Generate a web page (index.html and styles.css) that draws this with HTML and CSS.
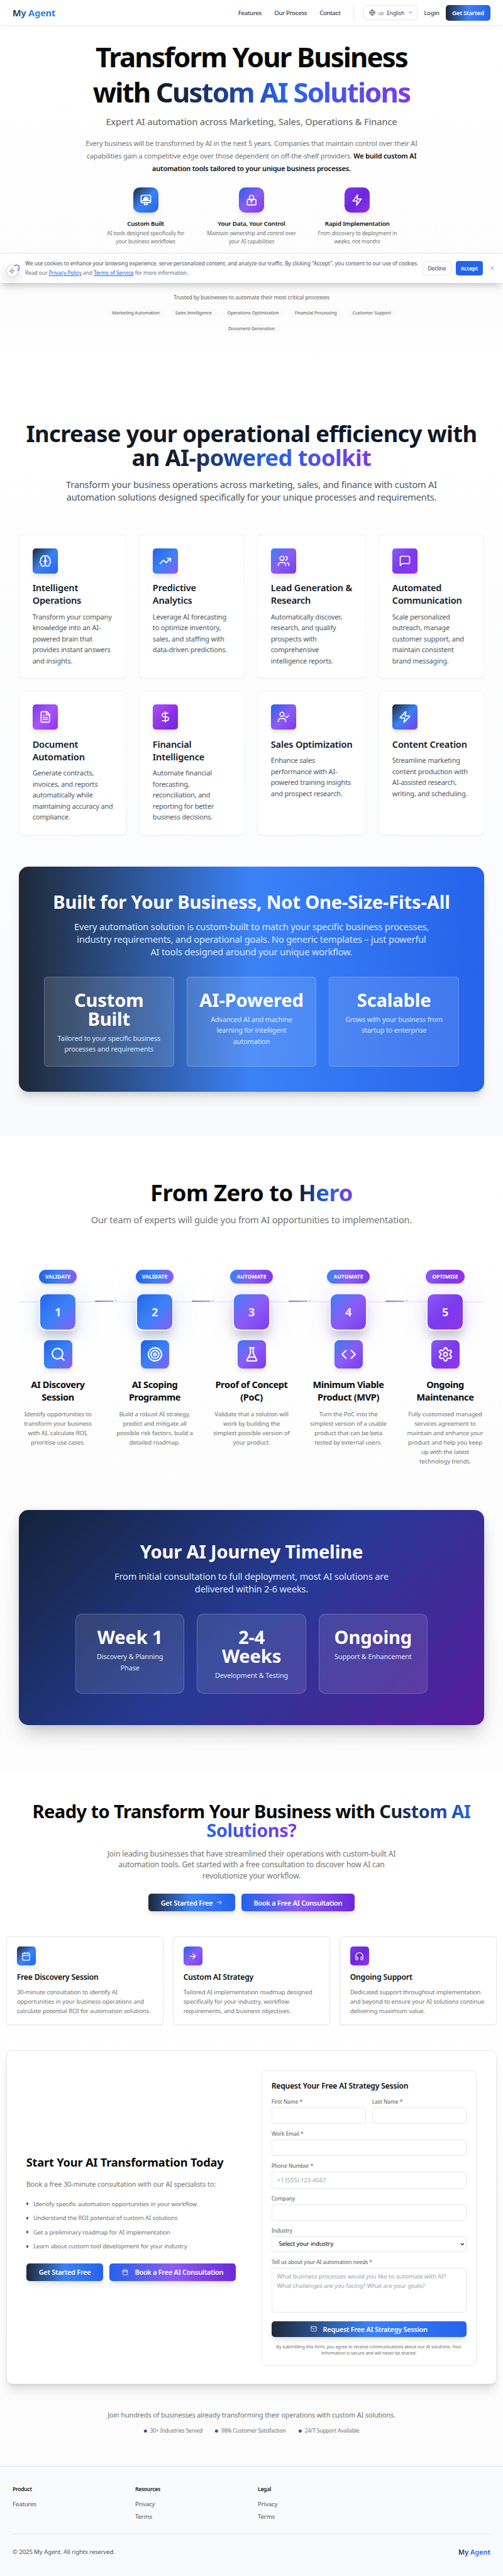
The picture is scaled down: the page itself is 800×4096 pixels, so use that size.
FILE: index.html
```html
<!DOCTYPE html>
<html lang="en">
<head>
<meta charset="utf-8">
<title>My Agent</title>
<link rel="stylesheet" href="styles.css">
</head>
<body>
<header class="nav">
  <a class="logo">My Agent</a>
  <nav class="nav-links"><a>Features</a><a>Our Process</a><a>Contact</a></nav>
  <div class="nav-side">
    <div class="lang">
      <svg class="ic" viewBox="0 0 24 24"><circle cx="12" cy="12" r="10"/><path d="M12 2a14.5 14.5 0 0 0 0 20 14.5 14.5 0 0 0 0-20M2 12h20"/></svg>
      <span class="cc">us</span><span>English</span>
      <svg class="ic chev" viewBox="0 0 24 24"><path d="m5 8 7 8 7-8"/></svg>
    </div>
    <a class="login">Login</a>
    <a class="btn-start g-navy">Get Started</a>
  </div>
</header>

<div class="cookie">
  <svg class="ic shield" viewBox="0 0 24 24"><path d="M20 13c0 5-3.5 7.500-8 9-4.500-1.500-8-4-8-9V6a1 1 0 0 1 1-1c2 0 4.500-1.200 6.240-2.720a1.170 1.170 0 0 1 1.520 0C14.510 3.810 17 5 19 5a1 1 0 0 1 1 1z"/></svg>
  <p class="cookie-text">We use cookies to enhance your browsing experience, serve personalized content, and analyze our traffic. By clicking "Accept", you consent to our use of cookies.<br><span>Read our <a>Privacy Policy</a> and <a>Terms of Service</a> for more information.</span></p>
  <button class="c-btn">Decline</button>
  <button class="c-btn accept">Accept</button>
  <svg class="ic close" viewBox="0 0 24 24"><path d="M18 5 6 19M6 5l12 14"/></svg>
  <div class="widget"><svg class="ic" viewBox="0 0 24 24"><path d="M13 2 3 14h9l-1 8 10-12h-9z"/></svg></div>
</div>

<section class="hero">
  <h1>Transform Your Business<br>with <span class="gt">Custom AI Solutions</span></h1>
  <p class="sub">Expert AI automation across Marketing, Sales, Operations &amp; Finance</p>
  <p class="lead">Every business will be transformed by AI in the next 5 years. Companies that maintain control over their AI<br>capabilities gain a competitive edge over those dependent on off-the-shelf providers. <b>We build custom AI<br>automation tools tailored to your unique business processes.</b></p>
  <div class="points">
    <div class="point"><div class="tile round t1"><svg class="ic" viewBox="0 0 24 24"><rect x="3" y="3" width="18" height="14" rx="1.500"/><path d="M3 13h18M10 17.500l-1 3.500h6l-1-3.500z"/><path class="solid" d="M8.500 12.500a4 4 0 1 1 7 0z"/></svg></div><h4>Custom Built</h4><p>AI tools designed specifically for<br>your business workflows</p></div>
    <div class="point"><div class="tile round t7"><svg class="ic" viewBox="0 0 24 24"><rect x="4" y="11" width="16.500" height="10.500" rx="2"/><path d="M8 11V7a4 4 0 0 1 8 0v4M9.500 11.500 12 14l2.500-2.500M12 14v3.500"/></svg></div><h4>Your Data, Your Control</h4><p>Maintain ownership and control over<br>your AI capabilities</p></div>
    <div class="point"><div class="tile round t0"><svg class="ic" viewBox="0 0 24 24"><path d="M13 2 4 14h8l-1 8 9-12h-8z"/><path class="tint" d="m12 9 4 2-4 5-2-3z"/></svg></div><h4>Rapid Implementation</h4><p>From discovery to deployment in<br>weeks, not months</p></div>
  </div>
  <p class="trusted">Trusted by businesses to automate their most critical processes</p>
  <div class="tags"><span>Marketing Automation</span><span>Sales Intelligence</span><span>Operations Optimization</span><span>Financial Processing</span><span>Customer Support</span><span>Document Generation</span></div>
</section>

<section class="toolkit">
  <h2 class="ink">Increase your operational efficiency with<br>an <span class="gt">AI-powered toolkit</span></h2>
  <p class="intro slate">Transform your business operations across marketing, sales, and finance with custom AI<br>automation solutions designed specifically for your unique processes and requirements.</p>
  <div class="cards">
    <article class="card"><div class="tile t1"><svg class="ic" viewBox="0 0 24 24"><path d="M12 5a3 3 0 1 0-5.997.125 4 4 0 0 0-2.526 5.770 4 4 0 0 0 .556 6.588A4 4 0 1 0 12 18Z"/><path d="M12 5a3 3 0 1 1 5.997.125 4 4 0 0 1 2.526 5.770 4 4 0 0 1-.556 6.588A4 4 0 1 1 12 18Z"/><path d="M15 13a4.500 4.500 0 0 1-3-4 4.500 4.500 0 0 1-3 4"/></svg></div><h3>Intelligent<br>Operations</h3><p>Transform your company<br>knowledge into an AI-<br>powered brain that<br>provides instant answers<br>and insights.</p></article>
    <article class="card"><div class="tile t2"><svg class="ic" viewBox="0 0 24 24"><path d="m22 7-8.500 8.500-5-5L2 17M16 7h6v6"/></svg></div><h3>Predictive<br>Analytics</h3><p>Leverage AI forecasting<br>to optimize inventory,<br>sales, and staffing with<br>data-driven predictions.</p></article>
    <article class="card"><div class="tile t3"><svg class="ic" viewBox="0 0 24 24"><path d="M16 21v-2a4 4 0 0 0-4-4H6a4 4 0 0 0-4 4v2M22 21v-2a4 4 0 0 0-3-3.870M16 3.130a4 4 0 0 1 0 7.750"/><circle cx="9" cy="7" r="4"/></svg></div><h3>Lead Generation &amp;<br>Research</h3><p>Automatically discover,<br>research, and qualify<br>prospects with<br>comprehensive<br>intelligence reports.</p></article>
    <article class="card"><div class="tile t4"><svg class="ic" viewBox="0 0 24 24"><path d="M21 15a2 2 0 0 1-2 2H7l-4 4V5a2 2 0 0 1 2-2h14a2 2 0 0 1 2 2z"/></svg></div><h3>Automated<br>Communication</h3><p>Scale personalized<br>outreach, manage<br>customer support, and<br>maintain consistent<br>brand messaging.</p></article>
    <article class="card"><div class="tile t5"><svg class="ic" viewBox="0 0 24 24"><path d="M15 2H6a2 2 0 0 0-2 2v16a2 2 0 0 0 2 2h12a2 2 0 0 0 2-2V7Z"/><path d="M14 2v4a2 2 0 0 0 2 2h4M10 9H8M16 13H8M16 17H8"/></svg></div><h3>Document<br>Automation</h3><p>Generate contracts,<br>invoices, and reports<br>automatically while<br>maintaining accuracy and<br>compliance.</p></article>
    <article class="card"><div class="tile t6"><svg class="ic" viewBox="0 0 24 24"><path d="M12 2v20M17 5H9.500a3.500 3.500 0 0 0 0 7h5a3.500 3.500 0 0 1 0 7H6"/></svg></div><h3>Financial<br>Intelligence</h3><p>Automate financial<br>forecasting,<br>reconciliation, and<br>reporting for better<br>business decisions.</p></article>
    <article class="card"><div class="tile t7"><svg class="ic" viewBox="0 0 24 24"><path d="M16 21v-2a4 4 0 0 0-4-4H6a4 4 0 0 0-4 4v2M16 11l2 2 4-4"/><circle cx="9" cy="7" r="4"/></svg></div><h3>Sales Optimization</h3><p>Enhance sales<br>performance with AI-<br>powered training insights<br>and prospect research.</p></article>
    <article class="card"><div class="tile t8"><svg class="ic" viewBox="0 0 24 24"><path d="M4 14a1 1 0 0 1-.780-1.630l9.900-10.200a.5.5 0 0 1 .86.460l-1.920 6.020A1 1 0 0 0 13 10h7a1 1 0 0 1 .780 1.630l-9.900 10.200a.5.5 0 0 1-.86-.460l1.920-6.020A1 1 0 0 0 11 14z"/></svg></div><h3>Content Creation</h3><p>Streamline marketing<br>content production with<br>AI-assisted research,<br>writing, and scheduling.</p></article>
  </div>
  <div class="banner built g-navy">
    <h3>Built for Your Business, Not One-Size-Fits-All</h3>
    <p>Every automation solution is custom-built to match your specific business processes,<br>industry requirements, and operational goals. No generic templates – just powerful<br>AI tools designed around your unique workflow.</p>
    <div class="glass-row">
      <div class="glass"><strong>Custom<br>Built</strong><small>Tailored to your specific business<br>processes and requirements</small></div>
      <div class="glass"><strong>AI-Powered</strong><small>Advanced AI and machine<br>learning for intelligent<br>automation</small></div>
      <div class="glass"><strong>Scalable</strong><small>Grows with your business from<br>startup to enterprise</small></div>
    </div>
  </div>
</section>

<section class="process">
  <h2>From Zero to <span class="gt">Hero</span></h2>
  <p class="intro">Our team of experts will guide you from AI opportunities to implementation.</p>
  <div class="steps">
    <div class="step blue"><span class="pill p1">VALIDATE</span><div class="num t2">1</div><div class="tile t2"><svg class="ic" viewBox="0 0 24 24"><circle cx="11" cy="11" r="8"/><path d="m21 21-4.300-4.300"/></svg></div><h3>AI Discovery<br>Session</h3><p>Identify opportunities to<br>transform your business<br>with AI, calculate ROI,<br>prioritise use cases.</p><i class="dash"></i></div>
    <div class="step blue"><span class="pill p1">VALIDATE</span><div class="num t2">2</div><div class="tile t2"><svg class="ic" viewBox="0 0 24 24"><circle cx="12" cy="12" r="10"/><circle cx="12" cy="12" r="6"/><circle cx="12" cy="12" r="2"/></svg></div><h3>AI Scoping<br>Programme</h3><p>Build a robust AI strategy,<br>predict and mitigate all<br>possible risk factors, build a<br>detailed roadmap.</p><i class="dash"></i></div>
    <div class="step"><span class="pill p2">AUTOMATE</span><div class="num t3">3</div><div class="tile t3"><svg class="ic" viewBox="0 0 24 24"><path d="M10 2v7.530a2 2 0 0 1-.210.900L4.720 20.550a1 1 0 0 0 .9 1.450h12.760a1 1 0 0 0 .9-1.450l-5.070-10.120a2 2 0 0 1-.210-.900V2M8.500 2h7M7 16h10"/></svg></div><h3>Proof of Concept<br>(PoC)</h3><p>Validate that a solution will<br>work by building the<br>simplest possible version of<br>your product.</p><i class="dash"></i></div>
    <div class="step"><span class="pill p2">AUTOMATE</span><div class="num t3">4</div><div class="tile t3"><svg class="ic" viewBox="0 0 24 24"><path d="m16 18 6-6-6-6M8 6l-6 6 6 6"/></svg></div><h3>Minimum Viable<br>Product (MVP)</h3><p>Turn the PoC into the<br>simplest version of a usable<br>product that can be beta<br>tested by external users.</p><i class="dash"></i></div>
    <div class="step violet"><span class="pill p3">OPTIMISE</span><div class="num t4">5</div><div class="tile t4"><svg class="ic" viewBox="0 0 24 24"><path d="M12.220 2h-.440a2 2 0 0 0-2 2v.180a2 2 0 0 1-1 1.730l-.430.250a2 2 0 0 1-2 0l-.150-.080a2 2 0 0 0-2.730.730l-.220.380a2 2 0 0 0 .730 2.730l.150.100a2 2 0 0 1 1 1.720v.510a2 2 0 0 1-1 1.740l-.150.090a2 2 0 0 0-.730 2.730l.220.380a2 2 0 0 0 2.730.730l.150-.080a2 2 0 0 1 2 0l.430.250a2 2 0 0 1 1 1.730V20a2 2 0 0 0 2 2h.440a2 2 0 0 0 2-2v-.180a2 2 0 0 1 1-1.730l.430-.250a2 2 0 0 1 2 0l.150.080a2 2 0 0 0 2.730-.730l.220-.390a2 2 0 0 0-.730-2.730l-.150-.080a2 2 0 0 1-1-1.740v-.500a2 2 0 0 1 1-1.740l.150-.090a2 2 0 0 0 .730-2.730l-.220-.380a2 2 0 0 0-2.730-.730l-.150.080a2 2 0 0 1-2 0l-.430-.250a2 2 0 0 1-1-1.730V4a2 2 0 0 0-2-2z"/><circle cx="12" cy="12" r="3"/></svg></div><h3>Ongoing<br>Maintenance</h3><p>Fully customised managed<br>services agreement to<br>maintain and enhance your<br>product and help you keep<br>up with the latest<br>technology trends.</p></div>
  </div>
  <div class="banner journey">
    <h3>Your AI Journey Timeline</h3>
    <p>From initial consultation to full deployment, most AI solutions are<br>delivered within 2-6 weeks.</p>
    <div class="glass-row">
      <div class="glass"><strong>Week 1</strong><small>Discovery &amp; Planning<br>Phase</small></div>
      <div class="glass"><strong>2-4<br>Weeks</strong><small>Development &amp; Testing</small></div>
      <div class="glass"><strong>Ongoing</strong><small>Support &amp; Enhancement</small></div>
    </div>
  </div>
</section>

<section class="contact">
  <h2>Ready to Transform Your Business with <span class="gt">Custom AI<br>Solutions?</span></h2>
  <p class="pitch">Join leading businesses that have streamlined their operations with custom-built AI<br>automation tools. Get started with a free consultation to discover how AI can<br>revolutionize your workflow.</p>
  <div class="cta"><a class="btn g-navy">Get Started Free<svg class="ic arrow" viewBox="0 0 24 24"><path d="M4 12h16M13 5l7 7-7 7"/></svg></a><a class="btn g-violet">Book a Free AI Consultation</a></div>
  <div class="offers">
    <article class="offer"><div class="tile t1"><svg class="ic" viewBox="0 0 24 24"><rect x="3" y="4" width="18" height="18" rx="2"/><path d="M8 2v4M16 2v4M3 10h18"/></svg></div><h3>Free Discovery Session</h3><p>30-minute consultation to identify AI<br>opportunities in your business operations and<br>calculate potential ROI for automation solutions.</p></article>
    <article class="offer"><div class="tile t7"><svg class="ic" viewBox="0 0 24 24"><path d="M5 12h14M12 5l7 7-7 7"/></svg></div><h3>Custom AI Strategy</h3><p>Tailored AI implementation roadmap designed<br>specifically for your industry, workflow<br>requirements, and business objectives.</p></article>
    <article class="offer"><div class="tile t0"><svg class="ic" viewBox="0 0 24 24"><path d="M3 14h3a2 2 0 0 1 2 2v3a2 2 0 0 1-2 2H5a2 2 0 0 1-2-2v-7a9 9 0 0 1 18 0v7a2 2 0 0 1-2 2h-1a2 2 0 0 1-2-2v-3a2 2 0 0 1 2-2h3"/></svg></div><h3>Ongoing Support</h3><p>Dedicated support throughout implementation<br>and beyond to ensure your AI solutions continue<br>delivering maximum value.</p></article>
  </div>
  <div class="start">
    <div class="start-copy">
      <h3>Start Your AI Transformation Today</h3>
      <p>Book a free 30-minute consultation with our AI specialists to:</p>
      <ul><li>Identify specific automation opportunities in your workflow</li><li>Understand the ROI potential of custom AI solutions</li><li>Get a preliminary roadmap for AI implementation</li><li>Learn about custom tool development for your industry</li></ul>
      <div class="start-btns"><a class="btn g-navy">Get Started Free</a><a class="btn g-violet"><svg class="ic cal" viewBox="0 0 24 24"><rect x="3" y="4" width="18" height="18" rx="2"/><path d="M8 2v4M16 2v4M3 10h18"/></svg>Book a Free AI Consultation</a></div>
    </div>
    <form class="form">
      <h4>Request Your Free AI Strategy Session</h4>
      <div class="pair"><label>First Name *<input></label><label>Last Name *<input></label></div>
      <label>Work Email *<input></label>
      <label>Phone Number *<input placeholder="+1 (555) 123-4567"></label>
      <label>Company<input></label>
      <label>Industry<span class="select"><select><option>Select your industry</option></select><svg class="ic" viewBox="0 0 24 24"><path d="m5 8 7 8 7-8"/></svg></span></label>
      <label>Tell us about your AI automation needs *<textarea placeholder="What business processes would you like to automate with AI?&#10;What challenges are you facing? What are your goals?"></textarea></label>
      <button class="btn g-navy submit" type="button"><svg class="ic cal" viewBox="0 0 24 24"><rect x="2" y="3" width="20" height="18" rx="2"/><path d="m3 6 9 8 9-8"/></svg>Request Free AI Strategy Session</button>
      <p class="note">By submitting this form, you agree to receive communications about our AI solutions. Your<br>information is secure and will never be shared.</p>
    </form>
  </div>
  <p class="join">Join hundreds of businesses already transforming their operations with custom AI solutions.</p>
  <div class="stats"><span>30+ Industries Served</span><span>98% Customer Satisfaction</span><span>24/7 Support Available</span></div>
</section>

<footer class="footer">
  <div class="foot-cols">
    <div><h5>Product</h5><a>Features</a></div>
    <div><h5>Resources</h5><a>Privacy</a><a>Terms</a></div>
    <div><h5>Legal</h5><a>Privacy</a><a>Terms</a></div>
  </div>
  <div class="foot-base"><span>© 2025 My Agent. All rights reserved.</span><a class="logo">My Agent</a></div>
</footer>
</body>
</html>
```
FILE: styles.css
```css
html { font-size: 6.25px; }
* { box-sizing: border-box; margin: 0; padding: 0; }
body {
  position: relative;
  width: 128rem;
  height: 4096px;
  overflow: hidden;
  background: #fff;
  color: #0a0a0a;
  font-family: "Noto Sans", "Open Sans", sans-serif;
  font-size: 1.55rem;
  line-height: 2.4rem;
  letter-spacing: -0.016em;
  white-space: nowrap;
}
ul { list-style: none; }
button, input, select, textarea { font: inherit; letter-spacing: inherit; color: inherit; border: 0; background: none; outline: 0; }
.ic { display: block; flex: none; fill: none; stroke: currentColor; stroke-width: 2; stroke-linecap: round; stroke-linejoin: round; }
.solid { fill: #fff; }
.tint { fill: rgba(255,255,255,.35); stroke: none; }

/* gradients */
.g-navy { background: linear-gradient(90deg, #1f2937, #3b82f6 50%, #2563eb); }
.g-violet { background: linear-gradient(90deg, #2563eb, #8b5cf6 50%, #6d28d9); }
.t0 { background: linear-gradient(135deg, #7c3aed, #6d28d9 50%, #9333ea); }
.t1 { background: linear-gradient(135deg, #1f2937, #3b82f6 50%, #2563eb); }
.t2 { background: linear-gradient(135deg, #2563eb, #3b82f6 50%, #8b5cf6); }
.t3 { background: linear-gradient(135deg, #3b82f6, #8b5cf6 50%, #7c3aed); }
.t4 { background: linear-gradient(135deg, #8b5cf6, #7c3aed 50%, #9333ea); }
.t5 { background: linear-gradient(135deg, #7c3aed, #a855f7 50%, #9333ea); }
.t6 { background: linear-gradient(135deg, #a855f7, #9333ea 50%, #6d28d9); }
.t7 { background: linear-gradient(135deg, #2563eb, #8b5cf6 50%, #7c3aed); }
.t8 { background: linear-gradient(135deg, #1f2937, #3b82f6 50%, #7c3aed); }
.p1 { background: linear-gradient(90deg, #2563eb, #3b82f6 50%, #8b5cf6); }
.p2 { background: linear-gradient(90deg, #3b82f6, #8b5cf6 50%, #7c3aed); }
.p3 { background: linear-gradient(90deg, #8b5cf6, #7c3aed 50%, #9333ea); }
.gt { background: linear-gradient(90deg, #171717, #2563eb 50%, #7c3aed); -webkit-background-clip: text; background-clip: text; color: transparent; }
.logo { font-weight: 700; background: linear-gradient(90deg, #1f2937, #3b82f6 50%, #2563eb); -webkit-background-clip: text; background-clip: text; color: transparent; }

/* header */
.nav { display: flex; align-items: center; height: 6.4rem; padding: 0 3.2rem; background: #fff; box-shadow: 0 .1rem .3rem rgba(0,0,0,.1); color: #374151; position: relative; }
.nav .logo { font-size: 2.33rem; line-height: 3.2rem; margin-right: auto; }
.nav-links { display: flex; gap: 3.2rem; padding-right: 3.2rem; font-weight: 500; letter-spacing: -0.035em; }
.nav-side { display: flex; align-items: center; height: 4rem; gap: 1.6rem; padding-left: 2.4rem; border-left: 1px solid #e5e7eb; }
.lang { display: flex; align-items: center; gap: .8rem; width: 13.9rem; height: 3.8rem; padding: 0 1.3rem; border: 1px solid #e5e7eb; border-radius: .8rem; font-size: 1.36rem; }
.lang .ic { width: 1.6rem; height: 1.6rem; }
.lang .cc { color: #6b7280; font-size: 1.3rem; }
.lang .chev { width: 1.2rem; height: 1.2rem; margin-left: .2rem; stroke-width: 2.400; }
.login { font-weight: 500; letter-spacing: -0.03em; }
.btn-start { height: 4rem; width: 11.4rem; border-radius: .8rem; color: #fff; font-weight: 600; line-height: 4rem; text-align: center; letter-spacing: -0.03em; }

/* cookie bar */
.cookie { position: absolute; top: 64.3rem; left: 0; width: 128rem; height: 7.7rem; display: flex; align-items: center; padding: 0 2rem 0 3.2rem; background: #fff; border-top: 1px solid #e5e7eb; box-shadow: 0 1rem 1.500rem -.3rem rgba(0,0,0,.16), 0 2rem 2.500rem -.5rem rgba(0,0,0,.06); z-index: 2; }
.shield { width: 2rem; height: 2rem; margin-right: 1.2rem; color: #2563eb; }
.cookie-text { width: 101.1rem; font-size: 1.36rem; letter-spacing: -0.012em; color: #4b5563; }
.cookie-text span { color: #6b7280; }
.cookie-text a { color: #2563eb; text-decoration: underline; }
.c-btn { height: 3.6rem; width: 7.3rem; flex: none; border: 1px solid #e5e7eb; border-radius: .6rem; font-size: 1.36rem; font-weight: 500; color: #4b5563; }
.c-btn.accept { width: 6.8rem; margin: 0 1.700rem 0 1.200rem; background: #2563eb; border-color: #2563eb; color: #fff; font-weight: 600; }
.close { width: 1.5rem; height: 1.4rem; color: #6b7280; }
.widget { position: absolute; left: 1.7rem; top: 3.1rem; width: 2.8rem; height: 2.8rem; display: flex; align-items: center; justify-content: center; border-radius: 50%; background: #fff; color: #737373; box-shadow: 0 0 .3rem rgba(0,0,0,.35), 0 1rem 3rem rgba(0,0,0,.22); }
.widget .ic { width: 1.6rem; height: 1.6rem; }

/* shared */
.tile { display: flex; align-items: center; justify-content: center; width: 6.4rem; height: 6.4rem; border-radius: .8rem; color: #fff; box-shadow: 0 1rem 1.5rem -.3rem rgba(0,0,0,.1), 0 .4rem .6rem -.4rem rgba(0,0,0,.1); }
.tile .ic { width: 3.2rem; height: 3.2rem; }
.tile.round { border-radius: 1.6rem; margin: 0 auto 1.6rem; }
h2 { padding-top: .23rem; font-size: 5.82rem; line-height: 6rem; font-weight: 700; letter-spacing: -0.018em; margin-bottom: 2.17rem; }
.ink { color: #111827; }
.intro { font-size: 2.33rem; line-height: 3.2rem; color: #737373; }
.slate { color: #4b5563; }

/* hero */
.hero { height: 89.6rem; padding-top: 3.2rem; text-align: center; background: linear-gradient(#fff, #fdfdfd 80%, #fff); }
h1 { padding-top: .27rem; font-size: 7rem; line-height: 9rem; font-weight: 700; letter-spacing: -0.043em; margin-bottom: 1.33rem; }
.sub { font-size: 2.33rem; line-height: 3.2rem; font-weight: 500; color: #737373; margin-bottom: 2.4rem; }
.lead { font-size: 1.75rem; line-height: 3.2rem; color: #737373; margin-bottom: 3.2rem; }
.lead b { color: #0a0a0a; font-weight: 600; }
.points { display: grid; grid-template-columns: repeat(3, 1fr); gap: 3.2rem; width: 77.6rem; margin: 0 auto; }
.point h4 { font-size: 1.55rem; font-weight: 600; margin-bottom: .4rem; }
.point p { font-size: 1.36rem; line-height: 2rem; color: #737373; }
.trusted { margin-top: 12.3rem; font-size: 1.36rem; line-height: 2rem; font-weight: 500; color: #737373; }
.tags { display: flex; flex-wrap: wrap; justify-content: center; gap: 1.6rem; width: 80rem; margin: 1.7rem auto 0; }
.tags span { padding: 0 1.2rem; border-radius: .8rem; background: #fafafa; font-size: 1.16rem; font-weight: 500; color: #737373; }

/* toolkit */
.toolkit { height: 193rem; padding: 11.2rem 4.8rem; background: linear-gradient(#fff, #f9fafc); text-align: center; }
.cards { display: grid; grid-template-columns: repeat(4, 1fr); grid-auto-rows: 36.6rem; gap: 3.2rem; margin: 8rem 0; text-align: left; }
.card { padding: 3.3rem; background: #fff; border: 1px solid #f3f4f6; border-radius: 1.2rem; box-shadow: 0 .1rem .2rem rgba(0,0,0,.06); }
.card h3 { margin: 2rem 0 1.2rem; font-size: 2.33rem; line-height: 3.2rem; font-weight: 600; color: #111827; }
.card p { font-size: 1.75rem; line-height: 2.8rem; color: #4b5563; }
.banner { border-radius: 2.4rem; color: #fff; text-align: center; box-shadow: 0 2rem 2.5rem -.5rem rgba(0,0,0,.12), 0 .8rem 1rem -.6rem rgba(0,0,0,.1); }
.banner h3 { padding-top: .18rem; font-size: 4.66rem; line-height: 4.8rem; font-weight: 700; margin-bottom: 2.22rem; }
.banner > p { font-size: 2.33rem; line-height: 3.2rem; color: #dbeafe; }
.built { padding: 6.4rem; height: 57.4rem; }
.glass-row { display: grid; grid-template-columns: repeat(3, 1fr); gap: 3.2rem; margin-top: 4.8rem; }
.glass { padding: 3.38rem 0 0; background: rgba(255,255,255,.1); border: 1px solid rgba(255,255,255,.2); border-radius: .8rem; }
.built .glass { height: 23rem; background: rgba(255,255,255,.12); }
.glass strong { display: block; font-size: 4.66rem; line-height: 4.8rem; margin-bottom: 1.1rem; }
.glass small { display: block; font-size: 1.75rem; line-height: 2.8rem; color: #dbeafe; }

/* process */
.process { height: 161.1rem; padding: 11.2rem 4.8rem; background: linear-gradient(#fff, #fcfcfd); text-align: center; }
.process h2 { letter-spacing: -0.012em; }
.steps { position: relative; display: grid; grid-template-columns: repeat(5, 1fr); gap: 4.8rem; height: 50rem; margin: 11.2rem 0; }
.steps::before { content: ""; position: absolute; top: 8rem; left: 0; right: 0; height: .4rem; background: linear-gradient(90deg, #e6effd, #efe9fe 50%, #f3e8ff); }
.step { position: relative; display: flex; flex-direction: column; align-items: center; }
.pill { height: 3.6rem; padding: 0 1.6rem; border-radius: 1.8rem; font-size: 1.36rem; line-height: 3.6rem; font-weight: 700; letter-spacing: 0.004em; color: #fff; box-shadow: 0 .4rem .8rem rgba(0,0,0,.1); }
.num { position: relative; width: 9.6rem; height: 9.6rem; margin: 2.4rem 0; border: .4rem solid #f1f1fd; border-radius: 1.8rem; background-origin: border-box; font-size: 2.9rem; line-height: 9rem; font-weight: 700; color: rgba(255,255,255,.9); box-shadow: 0 2rem 2.5rem -.5rem rgba(30,20,60,.22), 0 0 6rem 1rem rgba(139,92,246,.12); background-clip: padding-box; }
.blue .num { box-shadow: 0 2rem 2.5rem -.5rem rgba(20,30,60,.22), 0 0 6rem 1rem rgba(59,130,246,.12); }
.step .tile { width: 7.2rem; height: 7.2rem; border-radius: 1.2rem; }
.step .tile .ic { width: 4rem; height: 4rem; }
.step h3 { margin: 2.4rem 0 1.6rem; font-size: 2.33rem; line-height: 3.2rem; font-weight: 700; letter-spacing: -0.025em; }
.step p { color: #737373; }
.dash { position: absolute; left: 19.4rem; top: 7.8rem; width: 4.8rem; height: .4rem; border-radius: .2rem; background: linear-gradient(90deg, #868690, #b79cf8); }
.dash::after { content: ""; position: absolute; left: 5.2rem; top: -.1rem; border-left: .4rem solid #8b5cf6; border-top: .3rem solid transparent; border-bottom: .3rem solid transparent; }
.journey { height: 54.7rem; padding: 8rem 14.4rem; background: linear-gradient(135deg, #13233b, #263a94 50%, #581c9c); box-shadow: 0 2.5rem 5rem -1.2rem rgba(0,0,0,.25), 0 0 2rem rgba(0,0,0,.06); }
.journey .glass { height: 20.2rem; border-radius: 1.6rem; }

/* contact */
.contact { height: 177.2rem; padding: 8.1rem 1.6rem 0; background: linear-gradient(#fff, #fefefe 50%, #fcfcfd); text-align: center; }
.contact h2 { font-size: 4.66rem; line-height: 4.8rem; letter-spacing: -0.02em; }
.pitch { font-size: 1.94rem; line-height: 2.8rem; color: #737373; }
.cta { display: flex; justify-content: center; gap: 1.6rem; margin: 3.2rem 0 6.4rem; }
.btn { display: flex; align-items: center; justify-content: center; height: 4.4rem; padding: 0 3.2rem; border-radius: .8rem; font-size: 1.75rem; font-weight: 600; letter-spacing: -0.023em; color: #fff; box-shadow: 0 1rem 1.5rem -.3rem rgba(0,0,0,.12), 0 .4rem .6rem -.4rem rgba(0,0,0,.1); }
.arrow { width: 1.6rem; height: 1.6rem; margin-left: .8rem; }
.cal { width: 1.6rem; height: 1.6rem; margin-right: 1.6rem; }
.offers { display: grid; grid-template-columns: repeat(3, 1fr); gap: 2.4rem; text-align: left; }
.offer { height: 22.6rem; padding: 2.5rem; border: 1px solid #e5e7eb; border-radius: .8rem; background: #fff; box-shadow: 0 .1rem .2rem rgba(0,0,0,.05); }
.offer .tile { width: 4.8rem; height: 4.8rem; }
.offer .tile .ic { width: 2.4rem; height: 2.4rem; }
.offer h3 { margin: 1.6rem 0 1.2rem; font-size: 1.94rem; line-height: 2.8rem; font-weight: 600; }
.offer p { color: #737373; }
.start { display: grid; grid-template-columns: 1fr 1fr; align-items: center; gap: 4.8rem; height: 85rem; margin: 6.4rem 0; padding: 4.9rem; border: 1px solid #e5e7eb; border-radius: 1.6rem; background: #fff; text-align: left; box-shadow: 0 2rem 2.5rem -.5rem rgba(0,0,0,.1), 0 .8rem 1rem -.6rem rgba(0,0,0,.1); }
.start-copy h3 { font-size: 2.91rem; line-height: 3.6rem; font-weight: 700; margin-bottom: 2.4rem; }
.start-copy p { font-size: 1.75rem; line-height: 2.8rem; color: #737373; }
.start-copy ul { display: grid; gap: 1.2rem; margin: 2.4rem 0 3.2rem; color: #737373; }
.start-copy li { display: flex; align-items: center; gap: 1.2rem; }
.start-copy li::before { content: ""; width: .6rem; height: .6rem; border-radius: 50%; background: linear-gradient(90deg, #1e3a8a, #3b5bf6); }
.start-btns { display: flex; gap: 1.6rem; }
.form { height: 75.2rem; padding: 2.5rem; border: 1px solid #e5e7eb; border-radius: 1.2rem; }
.form h4 { margin-bottom: 1.6rem; font-size: 1.94rem; line-height: 2.8rem; font-weight: 600; }
.form label { display: block; margin-bottom: 1.6rem; font-size: 1.36rem; line-height: 2rem; font-weight: 500; color: #737373; }
.pair { display: grid; grid-template-columns: 1fr 1fr; gap: 1.6rem; }
.form input, .form textarea, .select { display: block; width: 100%; height: 4.2rem; margin-top: .4rem; padding: 0 1.3rem; border: 1px solid #e5e7eb; border-radius: .6rem; font-size: 1.55rem; font-weight: 400; background: #fff; }
.form ::placeholder { color: #9ca3af; opacity: 1; }
.form textarea { height: 11.4rem; padding: .8rem 1.2rem; line-height: 2.4rem; resize: none; overflow: hidden; white-space: pre; }
.form .select { height: 4rem; display: flex; align-items: center; padding: 0 .3rem 0 1.7rem; }
.select select { flex: 1; appearance: none; color: #0a0a0a; }
.select .ic { width: 1.1rem; height: 1.1rem; color: #0a0a0a; stroke-width: 4; }
.submit { width: 100%; height: 4rem; margin: 2.2rem 0 1.6rem; }
.note { font-size: 1.16rem; line-height: 1.6rem; color: #737373; text-align: center; }
.join { font-size: 1.75rem; line-height: 2.8rem; color: #737373; margin-bottom: 1.6rem; }
.stats { display: flex; justify-content: center; gap: 3.2rem; font-size: 1.36rem; line-height: 2rem; color: #737373; }
.stats span { display: flex; align-items: center; gap: .8rem; }
.stats span::before { content: ""; width: .8rem; height: .8rem; border-radius: 50%; background: linear-gradient(90deg, #1e293b, #2563eb 50%, #7c3aed); }

/* footer */
.footer { height: 28.4rem; padding: 4.8rem 3.2rem 0; border-top: 1px solid #e5e7eb; background: #f9fafc; color: #4b5563; }
.foot-cols { display: grid; grid-template-columns: repeat(4, 1fr); gap: 3.2rem; height: 12.5rem; border-bottom: 1px solid #e5e7eb; }
.foot-cols h5 { margin-bottom: 1.6rem; font-size: 1.36rem; line-height: 2rem; font-weight: 600; letter-spacing: -0.03em; color: #111827; }
.foot-cols a { display: block; margin-bottom: .8rem; }
.foot-base { display: flex; justify-content: space-between; padding-top: 3.2rem; }
.foot-base .logo { font-size: 1.75rem; }
```
